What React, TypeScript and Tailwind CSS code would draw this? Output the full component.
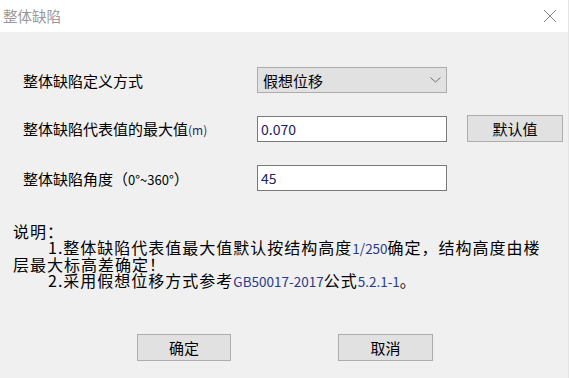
import React from "react";

function Chevron() {
  return (
    <svg width="11" height="6" viewBox="0 0 11 6" className="shrink-0">
      <path d="M0.5 0.5 L5.5 5 L10.5 0.5" fill="none" stroke="#6e6e6e" strokeWidth="1" />
    </svg>
  );
}

export default function App() {
  return (
    <div className="w-[569px] h-[378px] bg-[#f0f0f0] flex flex-col font-['Noto_Sans_CJK_SC','Microsoft_YaHei',sans-serif] text-[15px] text-black overflow-hidden border-r border-[#e4e4e4]">
      <div className="h-[32px] bg-white flex items-center justify-between pl-[3px] pr-[11px] shrink-0">
        <span className="text-[#9a9a9a] text-[14.5px] leading-none">整体缺陷</span>
        <svg width="14" height="14" viewBox="0 0 14 14">
          <path d="M1 1 L13 13 M13 1 L1 13" stroke="#8a8a8a" strokeWidth="1" fill="none" />
        </svg>
      </div>

      <div className="flex flex-col pt-[35px] pl-[23px]">
        <div className="flex items-center h-[26px]">
          <span className="w-[234px] leading-none">整体缺陷定义方式</span>
          <div className="w-[190px] h-[26px] bg-[#e1e1e1] border border-[#adadad] flex items-center justify-between pl-[5px] pr-[5px]">
            <span className="leading-none">假想位移</span>
            <Chevron />
          </div>
        </div>

        <div className="flex items-center h-[27px] mt-[22px]">
          <span className="w-[234px] leading-none">
            整体缺陷代表值的最大值<span className="text-[12px] text-[#1f2a6b]">(m)</span>
          </span>
          <div className="w-[190px] h-[26px] bg-white border border-[#7a7a7a] flex items-center pl-[3px]">
            <span className="leading-none text-[14px] text-[#1c2160]">0.070</span>
          </div>
          <div className="ml-[20px] w-[96px] h-[27px] bg-[#e1e1e1] border border-[#adadad] flex items-center justify-center">
            <span className="leading-none">默认值</span>
          </div>
        </div>

        <div className="flex items-center h-[26px] mt-[23px]">
          <span className="w-[234px] leading-none">
            整体缺陷角度（<span className="text-[13px]">0°~360°</span>）
          </span>
          <div className="w-[190px] h-[26px] bg-white border border-[#7a7a7a] flex items-center pl-[3px]">
            <span className="leading-none text-[14px] text-[#1c2160]">45</span>
          </div>
        </div>
      </div>

      <div className="mt-[32px] pl-[13px] leading-[16px] text-[16px] tracking-[1px]">
        <div>说明：</div>
        <div className="pl-[35px] whitespace-nowrap">
          1.整体缺陷代表值最大值默认按结构高度<span className="text-[13.5px] tracking-normal text-[#2a3a8a]">1/250</span>确定，结构高度由楼
        </div>
        <div>层最大标高差确定！</div>
        <div className="pl-[35px] whitespace-nowrap">
          2.采用假想位移方式参考<span className="text-[13.5px] tracking-normal text-[#2a3a8a]">GB50017-2017</span>公式<span className="text-[13.5px] tracking-normal text-[#2a3a8a]">5.2.1-1</span>。
        </div>
      </div>

      <div className="mt-auto mb-[17px] flex pl-[137px]">
        <div className="w-[94px] h-[27px] bg-[#e1e1e1] border border-[#adadad] flex items-center justify-center">
          <span className="leading-none">确定</span>
        </div>
        <div className="ml-[107px] w-[95px] h-[27px] bg-[#e1e1e1] border border-[#adadad] flex items-center justify-center">
          <span className="leading-none">取消</span>
        </div>
      </div>
    </div>
  );
}
